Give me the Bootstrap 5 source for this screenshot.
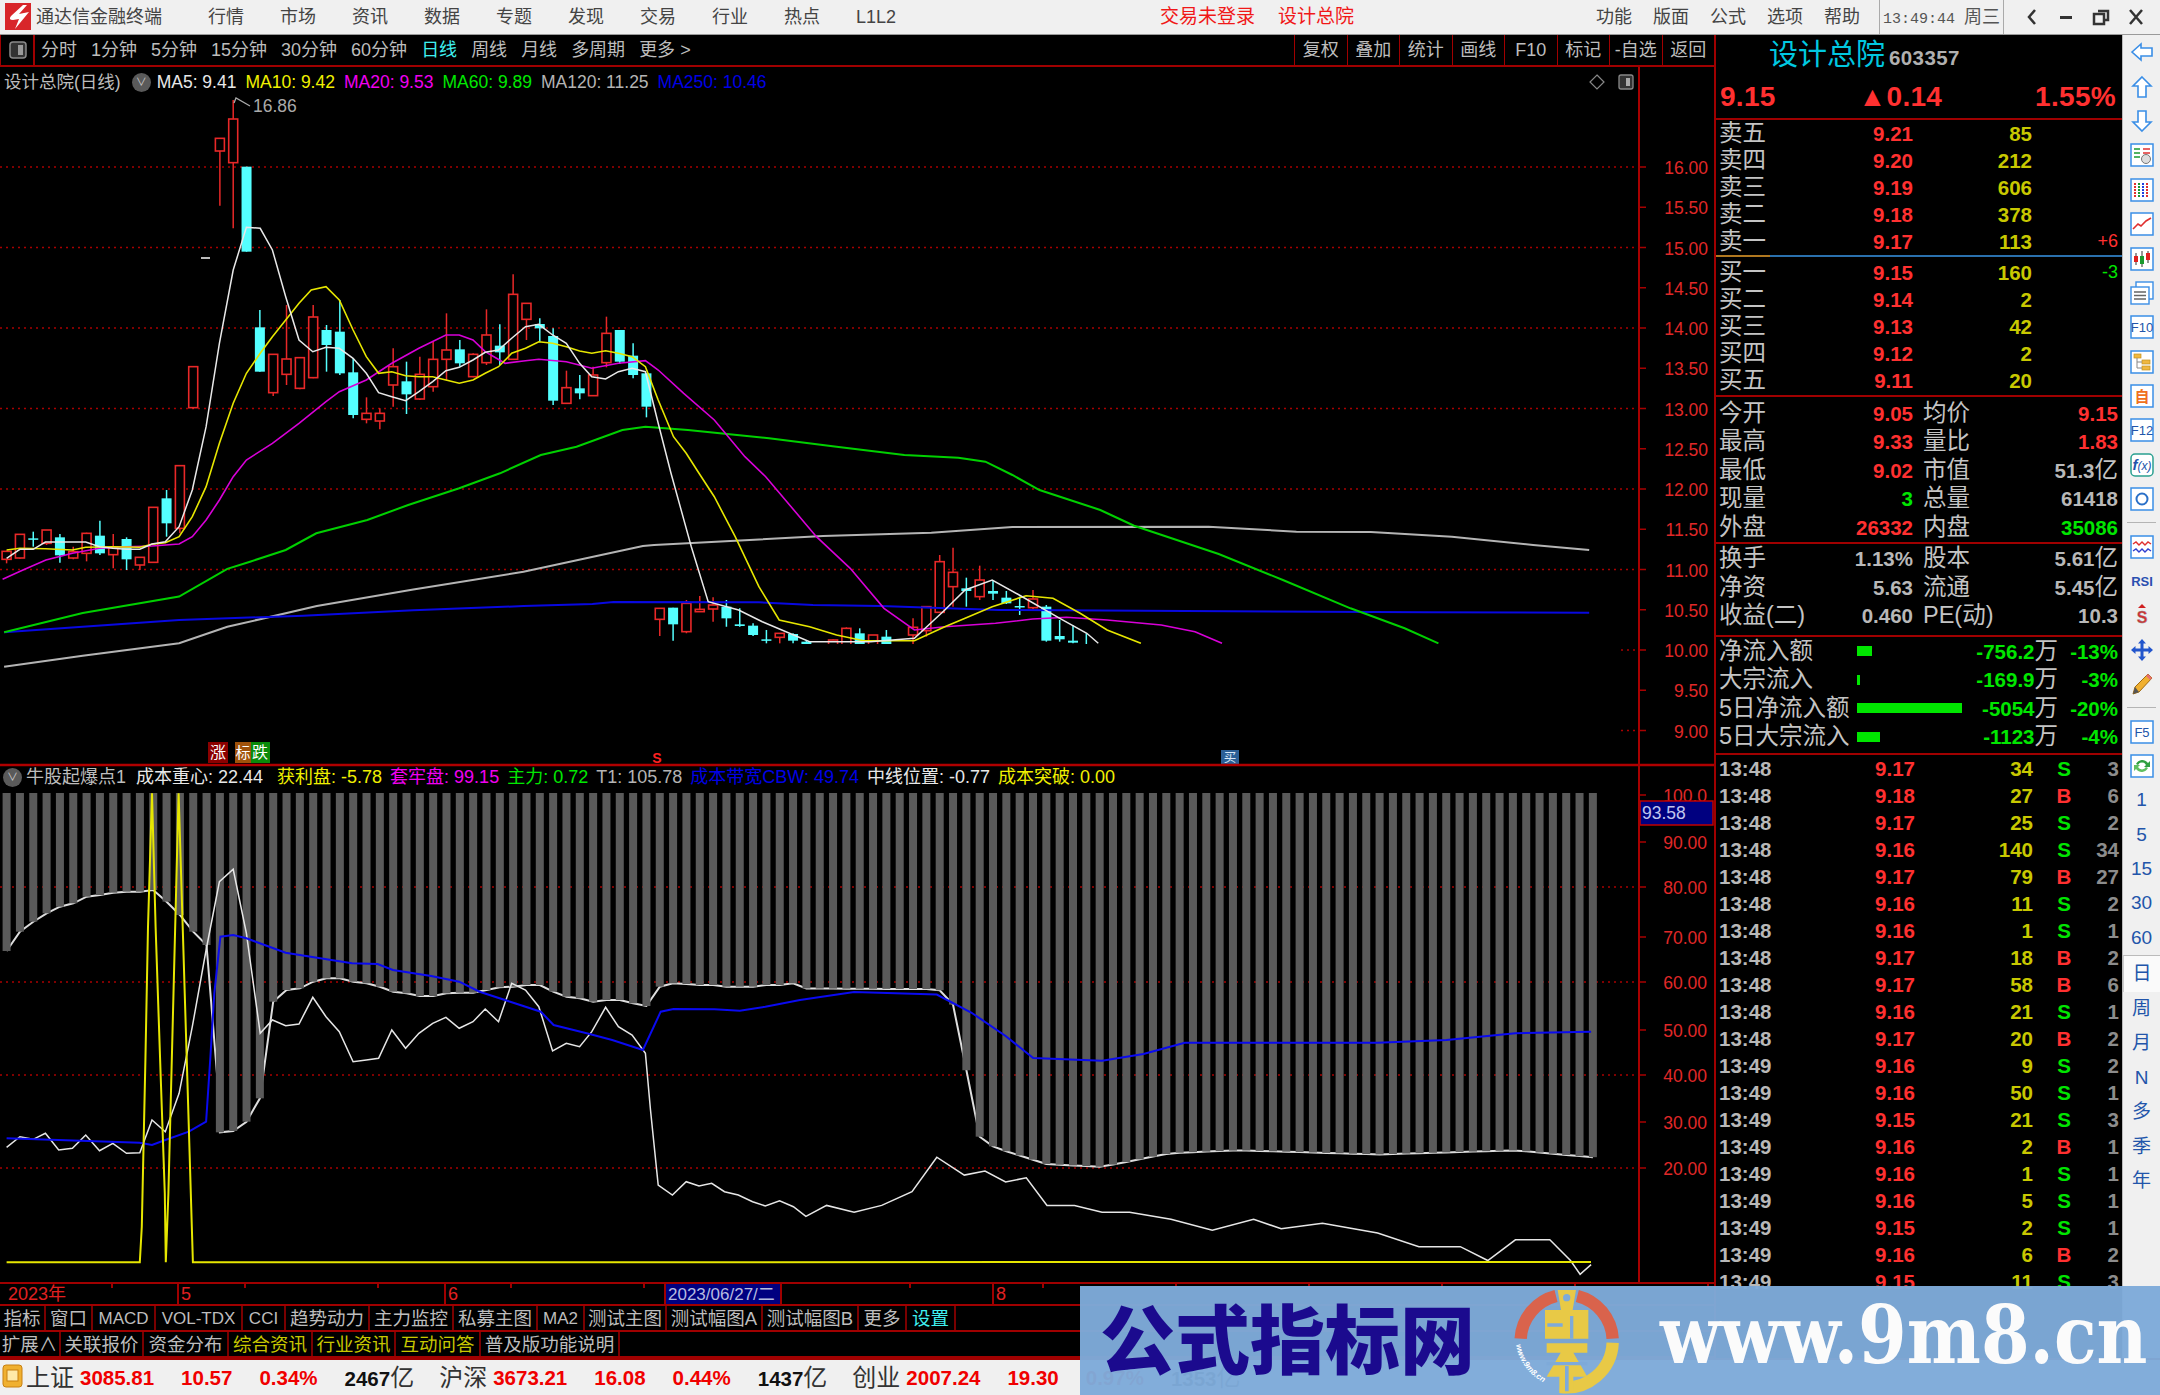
<!DOCTYPE html>
<html lang="zh-CN">
<head>
    <meta charset="UTF-8">
    <title>通达信金融终端</title>
    <link href="https://cdn.jsdelivr.net/npm/bootstrap@5.3.0/dist/css/bootstrap.min.css" rel="stylesheet">
    <style>
        html, body { margin: 0; background: #000; }
        body { font-family: "Liberation Sans", "Noto Sans CJK SC", sans-serif; }
        #app { width: 2160px; height: 1395px; overflow: hidden; }

        /* title bar */
        .title-bar { height: 35px; background: #f0f0f0; border-bottom: 1px solid #9a9a9a; color: #444; font-size: 18px; line-height: 34px; white-space: nowrap; }
        .brand-logo { margin: 3px 5px 0 5px; }
        .menu-left { margin-left: 46px; gap: 36px; }
        .menu-mid { margin-left: 264px; gap: 23px; color: #f01818; font-size: 19px; }
        .menu-right { margin-left: auto; gap: 21px; }
        .clock { margin-left: 19px; padding-left: 3px; border-left: 1px solid #aaa; color: #555; font-size: 15px; height: 34px; }
        .clock b { font-weight: 400; font-family: "Liberation Mono", monospace; margin-right: 9px; }
        .clock i { font-style: normal; font-size: 18px; margin-right: 3px; }
        .win-btns { border-left: 1px solid #aaa; height: 34px; width: 157px; padding: 8px 0 0 20px; gap: 17px; }

        /* period toolbar */
        .tool-bar { height: 32px; border-bottom: 2px solid #a00000; color: #bdbdbd; font-size: 18px; line-height: 31px; white-space: nowrap; }
        .toggle-box { width: 35px; border-right: 2px solid #a00000; border-left: 1px solid #a00000; margin-right: 6px; padding: 6px 0 0 8px; }
        .toggle-box svg { display: block; }
        .period-list { gap: 14px; }
        .period-on { color: #3ff0f0; }
        .tool-cell { width: 52.5px; text-align: center; border-left: 1px solid #a00000; }

        /* chart */
        .chart-box { width: 1714px; height: 1215px; }
        .chart-box svg { display: block; }
        .chart-box text { font-family: "Liberation Sans", "Noto Sans CJK SC", sans-serif; }
        .legend-row { position: absolute; left: 0; display: flex; font-size: 17.5px; line-height: 24px; color: #bdbdbd; white-space: nowrap; }
        .legend-main { top: 3px; padding-left: 4px; }
        .legend-sub { top: 698px; padding-left: 3px; font-size: 18px; }
        .lg-gap { margin-left: 9px; }
        .legend-sub .lg-gap { margin-left: 8px; }
        .legend-sub .lg-wide { margin-left: 10px; margin-right: 6px; }
        .tip-ball { width: 19px; height: 19px; border-radius: 50%; background: #5a5a5a; margin-top: 3px; color: #ccc; font-size: 11px; line-height: 19px; text-align: center; }
        .c-white { color: #e8e8e8; }
        .c-yellow { color: #f0f000; }
        .c-pink { color: #f000f0; }
        .c-green { color: #00e800; }
        .c-gray { color: #b4b4b4; }
        .c-blue { color: #0000e6; }

        /* bottom of the left column */
        .time-axis { height: 24px; border-top: 2px solid #a00000; border-bottom: 2px solid #a00000; color: #e02020; font-size: 18px; line-height: 21px;
            background: repeating-linear-gradient(90deg, transparent 0 111px, #a00000 111px 113px, transparent 113px 133px) top left / 100% 4px no-repeat; }
        .axis-cell { border-right: 2px solid #a00000; padding-left: 2px; }
        .axis-now { background: #000080; color: #b6bce0; padding: 0 2px; width: 116px; border-right: 2px solid #a00000; font-size: 17px; white-space: nowrap; }
        .tab-row { height: 26px; border-bottom: 2px solid #a00000; color: #bdbdbd; font-size: 18.5px; line-height: 25px; white-space: nowrap; }
        .tab-cell { text-align: center; border-right: 2px solid #7a0000; }
        .tab-cell.sm { font-size: 17px; }
        .tab-yellow { color: #c8c800; }
        .tab-cyan { color: #3ff0f0; }

        /* quote panel */
        .left-col { width: 1716px; border-right: 2px solid #a00000; }
        .main-row { height: 1323px; }
        .quote-panel { width: 406px; color: #c0c0c0; font-size: 20.5px; line-height: 27px; white-space: nowrap; overflow: hidden; }
        .q-name { height: 42px; padding-left: 53px; line-height: 40px; }
        .q-name b { font-weight: 400; color: #00c8e0; font-size: 29px; }
        .q-name span { font-weight: 700; font-size: 20.5px; margin-left: 4px; color: #b0b0b0; letter-spacing: .4px; }
        .q-price { height: 43px; padding: 0 6px 0 4px; border-bottom: 2px solid #a00000; color: #ff3030; font-size: 28px; font-weight: 700; line-height: 40px; letter-spacing: .3px; }
        .q-sect { padding: 0 2px 0 3px; flex: none; }
        .q-sect.line-b { border-bottom: 2px solid #a00000; }
        .q-label { font-size: 23.5px; color: #c4c4c4; font-weight: 400; }
        .depth-row, .stat-row, .flow-row, .deal-row { display: grid; align-items: center; font-weight: 700; }
        .depth-row { height: 27px; grid-template-columns: 60px 134px 119px 86px; }
        .stat-row { height: 28.5px; grid-template-columns: 60px 134px 10px 60px 1fr; padding-right: 2px; }
        .flow-row { height: 28.5px; grid-template-columns: 138px 110px 91px 60px; }
        .deal-row { height: 27px; grid-template-columns: 196px 118px 62px 24px; }
        .depth-split { height: 2px; flex: none; margin: 0 0 2px 0; background: linear-gradient(90deg, #b07820 54px, #2a70ad 54px); }
        .flow-bar { display: block; height: 10px; background: #00e600; }
        .v-red { color: #ff3030; }
        .v-yel { color: #c8c800; }
        .v-grn { color: #00e600; }
        .v-gry { color: #b8b8b8; }
        .v-dim { color: #8c8c8c; }
        .v-small { font-weight: 400; font-size: 18px; }

        /* side strip */
        .side-strip { width: 38px; background: #f0f0f0; border-left: 1px solid #bbb; color: #2255aa; font-size: 19px; }
        .side-ic { height: 34.4px; flex: none; }
        .side-ic svg text { font-family: "Liberation Sans", "Noto Sans CJK SC", sans-serif; }
        .side-sep { height: 13px; flex: none; }
        .side-sep i { display: block; margin: 6px 4px 0; height: 1px; background: #b4b4b4; }
        .side-now { height: 37px; flex: none; background: #fafafa; border-top: 1px solid #bbb; border-left: 1px solid #ccc; }

        /* status bar */
        .status-bar { height: 37px; background: #f0f0f0; border-top: 2px solid #a00000; line-height: 35px; font-size: 20.5px; font-weight: 700; color: #f00000; white-space: nowrap; padding-left: 2px; }
        .st-name { color: #333; font-size: 24px; font-weight: 400; margin-left: 25px; margin-right: 6px; }
        .st-name.first { margin-left: 3px; }
        .st-val { margin-left: 27px; }
        .st-val.first { margin-left: 0; }
        .st-amt { color: #111; }
        .st-amt em { font-style: normal; font-weight: 400; font-size: 24px; color: #333; }

        /* watermark strip */
        .stamp { position: absolute; left: 1080px; top: 1286px; width: 1080px; height: 109px; background: rgba(126, 170, 217, .97); }
        .stamp-cn { margin-left: 20px; width: 394px; font-family: "Noto Sans CJK SC", sans-serif; font-weight: 900; font-size: 75px; line-height: 100px; color: #1b0a8e; white-space: nowrap; }
        .stamp-logo { margin-left: -4px; width: 160px; }
        .stamp-url { margin-left: 10px; font-family: "DejaVu Serif", serif; font-weight: 700; font-size: 70px; line-height: 100px; color: #fbfbfb; transform: scaleY(1.15); white-space: nowrap; }
    </style>
</head>
<body>
<div id="app" class="position-relative">
    <!-- title bar -->
    <div class="title-bar d-flex">
        <svg class="brand-logo" width="26" height="27" viewBox="0 0 26 27"><rect width="26" height="27" fill="#d8262a"/><path d="M18 2 L6 13 Q3 17 8 17 L14 16 L10 26 L24 9 L14 11 L22 2Z" fill="#fff"/></svg>
        <span>通达信金融终端</span>
        <div class="d-flex menu-left"><span>行情</span><span>市场</span><span>资讯</span><span>数据</span><span>专题</span><span>发现</span><span>交易</span><span>行业</span><span>热点</span><span>L1L2</span></div>
        <div class="d-flex menu-mid"><span>交易未登录</span><span>设计总院</span></div>
        <div class="d-flex menu-right"><span>功能</span><span>版面</span><span>公式</span><span>选项</span><span>帮助</span></div>
        <div class="clock"><b>13:49:44</b><i>周三</i></div>
        <div class="win-btns d-flex">
            <svg width="16" height="18" viewBox="0 0 16 18"><path d="M11 2 L5 9 L11 16" fill="none" stroke="#333" stroke-width="2.5"/></svg>
            <svg width="18" height="18" viewBox="0 0 18 18"><rect x="3" y="8" width="12" height="3" fill="#333"/></svg>
            <svg width="18" height="18" viewBox="0 0 18 18"><path d="M6 3H16V12H13M2 6H12V16H2Z" fill="none" stroke="#333" stroke-width="2.5"/></svg>
            <svg width="18" height="18" viewBox="0 0 18 18"><path d="M3 2 L15 16 M15 2 L3 16" stroke="#333" stroke-width="2.5"/></svg>
        </div>
    </div>

    <div class="d-flex main-row">
        <div class="left-col d-flex flex-column">
            <!-- period toolbar -->
            <div class="tool-bar d-flex">
                <div class="toggle-box"><svg width="18" height="18" viewBox="0 0 18 18"><rect x="1" y="1" width="16" height="16" rx="3" fill="#333" stroke="#8a8a8a" stroke-width="1.5"/><rect x="9" y="4" width="5" height="10" fill="#9a9a9a"/></svg></div>
                <div class="d-flex period-list">
                    <span>分时</span><span>1分钟</span><span>5分钟</span><span>15分钟</span><span>30分钟</span><span>60分钟</span><span class="period-on">日线</span><span>周线</span><span>月线</span><span>多周期</span><span>更多 &gt;</span>
                </div>
                <div class="d-flex ms-auto">
                    <span class="tool-cell">复权</span><span class="tool-cell">叠加</span><span class="tool-cell">统计</span><span class="tool-cell">画线</span><span class="tool-cell">F10</span><span class="tool-cell">标记</span><span class="tool-cell">-自选</span><span class="tool-cell">返回</span>
                </div>
            </div>

            <!-- chart canvas, legends sit over it -->
            <div class="chart-box position-relative">
                <svg id="chart" width="1714" height="1215" viewBox="0 67 1714 1215"></svg>
                <div class="legend-row legend-main">
                    <span>设计总院(日线)</span>
                    <span class="tip-ball" style="margin-left:11px">&#8744;</span>
                    <span class="c-white" style="margin-left:6px">MA5: 9.41</span>
                    <span class="c-yellow lg-gap">MA10: 9.42</span>
                    <span class="c-pink lg-gap">MA20: 9.53</span>
                    <span class="c-green lg-gap">MA60: 9.89</span>
                    <span class="c-gray lg-gap">MA120: 11.25</span>
                    <span class="c-blue lg-gap">MA250: 10.46</span>
                </div>
                <div class="legend-row legend-sub">
                    <span class="tip-ball">&#8744;</span>
                    <span class="ms-1">牛股起爆点1</span>
                    <span class="c-white lg-wide">成本重心: 22.44</span>
                    <span class="c-yellow lg-gap">获利盘: -5.78</span>
                    <span class="c-pink lg-gap">套牢盘: 99.15</span>
                    <span class="c-green lg-gap">主力: 0.72</span>
                    <span class="c-gray lg-gap">T1: 105.78</span>
                    <span class="c-blue lg-gap">成本带宽CBW: 49.74</span>
                    <span class="c-white lg-gap">中线位置: -0.77</span>
                    <span class="c-yellow lg-gap">成本突破: 0.00</span>
                </div>
            </div>

            <div class="time-axis d-flex">
                <span class="axis-cell ps-2" style="width:179px">2023年</span>
                <span class="axis-cell" style="width:267px">5</span>
                <span class="axis-cell" style="width:220px">6</span>
                <span class="axis-now">2023/06/27/二</span>
                <span class="axis-cell" style="width:212px"></span>
                <span class="axis-cell border-0">8</span>
            </div>
            <div class="tab-row d-flex">
                <span class="tab-cell" style="width:46px">指标</span><span class="tab-cell" style="width:47px">窗口</span><span class="tab-cell sm" style="width:63px">MACD</span><span class="tab-cell sm" style="width:87px">VOL-TDX</span><span class="tab-cell sm" style="width:43px">CCI</span><span class="tab-cell" style="width:84px">趋势动力</span><span class="tab-cell" style="width:84px">主力监控</span><span class="tab-cell" style="width:84px">私募主图</span><span class="tab-cell sm" style="width:47px">MA2</span><span class="tab-cell" style="width:82px">测试主图</span><span class="tab-cell" style="width:96px">测试幅图A</span><span class="tab-cell" style="width:96px">测试幅图B</span><span class="tab-cell" style="width:48px">更多</span><span class="tab-cell tab-cyan" style="width:49px">设置</span>
            </div>
            <div class="tab-row d-flex">
                <span class="tab-cell" style="width:61px">扩展∧</span><span class="tab-cell" style="width:83px">关联报价</span><span class="tab-cell" style="width:85px">资金分布</span><span class="tab-cell tab-yellow" style="width:84px">综合资讯</span><span class="tab-cell tab-yellow" style="width:83px">行业资讯</span><span class="tab-cell tab-yellow" style="width:85px">互动问答</span><span class="tab-cell" style="width:139px">普及版功能说明</span>
            </div>
        </div>

        <!-- quote panel -->
        <div class="quote-panel d-flex flex-column">
            <div class="q-name"><b>设计总院</b><span>603357</span></div>
            <div class="q-price d-flex justify-content-between"><span>9.15</span><span style="margin-right:10px">▲0.14</span><span>1.55%</span></div>
            <div class="q-sect" id="depthAsk"></div>
            <div class="depth-split"></div>
            <div class="q-sect line-b" id="depthBid" style="padding-bottom:1px"></div>
            <div class="q-sect line-b" id="statA" style="padding-top:2px"></div>
            <div class="q-sect line-b" id="statB" style="padding-top:1px;padding-bottom:5px"></div>
            <div class="q-sect line-b" id="flows" style="padding-bottom:2px"></div>
            <div class="q-sect" id="deals"></div>
        </div>

        <!-- side strip -->
        <div class="side-strip d-flex flex-column" id="side"></div>
    </div>

    <!-- index status bar -->
    <div class="status-bar d-flex">
        <svg class="mt-1" width="21" height="24" viewBox="0 0 21 24"><rect x="1" y="1" width="19" height="22" rx="3" fill="#f0b030" stroke="#c88010"/><rect x="5" y="6" width="11" height="11" fill="#ffe9a8" stroke="#c88010"/></svg>
        <span class="st-name first">上证</span><span class="st-val first">3085.81</span><span class="st-val">10.57</span><span class="st-val">0.34%</span><span class="st-val st-amt">2467<em>亿</em></span>
        <span class="st-name">沪深</span><span class="st-val first">3673.21</span><span class="st-val">16.08</span><span class="st-val">0.44%</span><span class="st-val st-amt">1437<em>亿</em></span>
        <span class="st-name">创业</span><span class="st-val first">2007.24</span><span class="st-val">19.30</span><span class="st-val">0.97%</span><span class="st-val st-amt">1353<em>亿</em></span>
    </div>

    <!-- watermark strip over the bottom right -->
    <div class="stamp d-flex">
        <div class="stamp-cn">公式指标网</div>
        <svg class="stamp-logo" width="160" height="109" viewBox="0 0 480 327">
            <g fill="none" stroke-width="37">
                <path d="M92 158 A140 140 0 0 1 198 30" stroke="#d9634c"/>
                <path d="M262 30 A140 140 0 0 1 368 158" stroke="#d9634c"/>
                <path d="M368 170 A140 140 0 0 1 210 303" stroke="#e8c946"/>
            </g>
            <path d="M203 12H258L248 72H295V158H165V72H213Z" fill="#e8c946"/>
            <circle cx="230" cy="35" r="11" fill="#7eaad9"/>
            <path d="M172 112H218V122H172ZM240 90H250V158H240Z" fill="#7eaad9"/>
            <path d="M170 172H292V200H250L292 272H250V316H208V272H170L212 200H170Z" fill="#e8c946"/>
            <path d="M170 228H292V238H170ZM225 240H236V316H225Z" fill="#7eaad9"/>
            <path id="logoArc" d="M78 176 A156 156 0 0 0 196 302" fill="none"/>
            <text font-family="Liberation Sans" font-style="italic" font-weight="700" font-size="24" fill="#fff"><textPath href="#logoArc">www.9m8.cn</textPath></text>
        </svg>
        <div class="stamp-url">www.9m8.cn</div>
    </div>
</div>

<script src="https://cdn.jsdelivr.net/npm/bootstrap@5.3.0/dist/js/bootstrap.bundle.min.js"></script>
<script>
document.addEventListener('DOMContentLoaded', function() {
    // points read off the reference at different crop scales
    const z7 = pts => pts.map(([x, y]) => [x / 1.96, 90 + y / 3]);
    const z8 = pts => pts.map(([x, y]) => [600 + x / 1.479, 380 + y / 3]);
    const z9 = pts => pts.map(([x, y]) => [x / 1.96, 760 + y / 3]);
    const sh = pts => pts.map(([x, y]) => [x * 1.3776, y * 1.3776]);
    const barX = i => 6.6 + 13.33 * i;

    function line(pts, color, w, clip) {
        const d = pts.map(p => p[0].toFixed(1) + ',' + p[1].toFixed(1)).join(' ');
        return `<polyline points="${d}" fill="none" stroke="${color}" stroke-width="${w}"${clip ? ' clip-path="url(#topClip)"' : ''}/>`;
    }
    function dots(y, x1, x2) {
        return `<line x1="${x1}" y1="${y}" x2="${x2}" y2="${y}" stroke="#a80000" stroke-width="1.5" stroke-dasharray="2 4"/>`;
    }
    function label(x, y, txt, color, size, anchor) {
        return `<text x="${x}" y="${y}" fill="${color}" font-size="${size}" text-anchor="${anchor || 'start'}">${txt}</text>`;
    }

    // everything right of the flat stretch is blanked below y=644 in the reference
    let s = '<defs><clipPath id="topClip"><rect x="0" y="67" width="1640" height="577"/><rect x="0" y="644" width="640" height="116"/></clipPath></defs>';

    // main chart grid and price axis
    const priceY = p => 167 + (16 - p) * 80.5;
    [16, 15, 14, 13, 12, 11].forEach(p => { s += dots(priceY(p), 0, 1639); });
    [10, 9].forEach(p => { s += dots(priceY(p), 1621, 1639); });
    for (let p = 16; p >= 9; p -= 0.5) {
        s += `<line x1="1639" y1="${priceY(p)}" x2="1646" y2="${priceY(p)}" stroke="#a80000" stroke-width="1.5"/>`;
        s += label(1708, priceY(p) + 7, p.toFixed(2), '#e02828', 17.5, 'end');
    }

    // candles: [wick top, body top, body bottom, wick bottom]
    const early = ['r,1382,1384,1408,1420','r,1333,1333,1404,1406','c,1325,1345,1347,1370','r,1320,1320,1360,1365','c,1332,1342,1396,1418','r,1370,1385,1404,1408','r,1328,1330,1390,1414','c,1292,1337,1390,1395','r,1332,1372,1394,1435','c,1342,1347,1408,1440','r,1402,1402,1425,1440','r,1252,1252,1417,1417','c,1200,1225,1300,1340','r,1127,1127,1315,1330','r,830,830,953,956','','r,145,145,183,347','r,30,87,218,415','c,230,230,485,485','c,660,712,845,845','r,793,793,908,918','r,645,807,853,885','r,803,803,895,898','r,645,681,863,865','c,705,720,765,845','c,630,725,850,855','c,805,847,975,985','r,922,970,988,1000','r,955,970,993,1018','r,775,830,885,950','c,815,874,913,972','r,800,853,927,930','r,755,808,890,905','r,670,780,808,870','c,750,778,820,830','r,790,793,860,862','r,658,735,818,825','c,703,767,787,825','r,553,613,808,810','r,640,640,688,750','c,685,702,715,755','c,715,738,932,945','r,842,893,940,940','c,855,895,910,928','r,830,855,917,917','r,680,730,818,832','c,720,720,815,822','c,760,797,855,865','c,850,850,950,982'];
    const late = ['r,685,685,718,768','c,683,683,733,782','r,660,670,755,760','r,648,688,695,695','r,652,675,687,725','c,660,680,715,740','c,685,733,738,740','c,730,737,765,768','c,750,778,782,790','r,760,760,772,790','c,760,762,782,790','c,780,785,830,830','','r,778,780,800,800','r,742,745,800,800','c,745,760,800,800','r,765,765,800,800','c,750,770,800,800','','r,715,742,765,800','r,678,680,752,770','r,525,545,697,697','r,503,577,620,680','c,593,625,633,680','r,557,600,650,660','c,600,633,641,660','c,633,653,670,672','c,650,678,682,705','r,630,657,683,688','c,675,680,782,785','c,720,768,778,785','c,735,782,788,790','c,760,800,830,830'];
    function candle(i, row, toY) {
        if (!row) return '';
        const p = row.split(',');
        const col = p[0] === 'r' ? '#e82828' : '#54ffff';
        const [a, b, c, d] = p.slice(1).map(v => toY(+v));
        const x = barX(i);
        const h = Math.max(c - b, 1.5);
        let o = `<line x1="${x}" y1="${a}" x2="${x}" y2="${d}" stroke="${col}" stroke-width="1.5"/>`;
        if (p[0] === 'r') o += `<rect x="${x - 4.5}" y="${b}" width="9" height="${h}" fill="#000" stroke="${col}" stroke-width="1.6"/>`;
        else o += `<rect x="${x - 5}" y="${b}" width="10" height="${h}" fill="${col}"/>`;
        return o;
    }
    let cs = '';
    early.forEach((row, i) => { cs += candle(i, row, v => 90 + v / 3); });
    late.forEach((row, i) => { cs += candle(49 + i, row, v => 380 + v / 3); });
    s += `<g clip-path="url(#topClip)">${cs}</g>`;
    s += '<rect x="201" y="257" width="9" height="2" fill="#bbb"/>';

    // moving averages
    const ma120 = sh([[3,484],[60,476],[130,467],[165,455],[230,440],[300,428],[380,415]]).concat(z7([[1260,1368]]), z8([[80,495],[200,482],[330,468],[490,458],[610,441],[900,440],[1030,455],[1140,456],[1260,470],[1380,495],[1463,510]]));
    const ma250 = sh([[3,459],[130,450],[220,447],[300,443],[380,440],[430,438.5]]).concat(z8([[20,666],[235,667],[315,675],[415,678],[590,690],[865,693],[1220,697],[1463,698]]));
    const ma60 = sh([[3,459],[60,445],[130,433],[165,413]]).concat(z7([[490,1415],[560,1380],[620,1330],[720,1290],[800,1245],[900,1195],[980,1150],[1060,1095],[1130,1070],[1220,1020],[1265,1010]]), z8([[130,150],[250,175],[350,200],[450,225],[530,233],[570,245],[610,285],[650,330],[740,390],[790,437],[915,522],[1010,600],[1110,685],[1190,745],[1240,790]]));
    const ma20 = z7([[5,1468],[45,1440],[90,1410],[142,1390],[195,1375],[248,1370],[298,1368],[351,1362],[377,1340],[404,1290],[430,1230],[457,1160],[483,1110],[534,1060],[586,1000],[639,935],[665,905],[718,870],[768,820],[821,775],[874,735],[900,735],[927,750],[951,785],[990,820],[1030,812],[1056,808],[1110,815],[1160,835],[1212,820],[1265,812],[1290,840],[1340,910],[1400,990],[1460,1100]]).concat(z8([[245,290],[320,470],[370,565],[420,685],[465,750],[510,740],[585,730],[640,717],[690,712],[750,720],[830,735],[880,755],[920,790]]));
    const ma10 = z7([[13,1380],[39,1375],[89,1376],[142,1380],[168,1372],[221,1370],[274,1372],[298,1363],[324,1358],[351,1340],[377,1280],[404,1190],[430,1060],[457,940],[483,850],[510,790],[534,740],[560,690],[586,640],[610,600],[639,590],[665,630],[692,720],[718,800],[742,850],[768,845],[795,857],[821,860],[848,860],[874,870],[900,880],[927,870],[951,850],[977,830],[1003,790],[1030,775],[1056,755],[1083,760],[1110,770],[1136,783],[1160,790],[1187,782],[1212,790],[1239,800],[1265,830],[1290,930],[1320,1040],[1345,1090],[1370,1150],[1400,1220]]).concat(z8([[200,470],[235,620],[265,720],[310,740],[350,765],[390,782],[465,782],[510,740],[540,715],[580,680],[630,647],[670,655],[710,700],[750,750],[800,790]]));
    const ma5 = z7([[13,1405],[39,1378],[65,1378],[89,1356],[115,1356],[168,1356],[195,1370],[221,1375],[248,1378],[274,1378],[298,1362],[324,1355],[351,1310],[377,1200],[404,1010],[430,760],[457,540],[483,412],[510,415],[534,480],[560,620],[586,750],[613,785],[639,772],[665,775],[692,805],[718,850],[742,908],[768,920],[795,932],[821,905],[848,875],[874,842],[900,832],[927,810],[951,787],[977,780],[1003,745],[1030,710],[1056,703],[1083,735],[1110,760],[1136,820],[1160,860],[1187,867],[1212,845],[1239,835],[1265,845],[1290,1000]]).concat(z8([[105,280],[135,500],[160,665],[205,690],[240,725],[310,785],[400,785],[465,775],[510,690],[540,630],[580,600],[620,645],[680,715],[720,760],[737,790]]));
    s += line(ma120, '#b4b4b4', 2, true) + line(ma250, '#0808e0', 2, true) + line(ma60, '#00d000', 2, true);
    s += line(ma20, '#d800d8', 1.6, true) + line(ma10, '#e6e600', 1.6, true) + line(ma5, '#e8e8e8', 1.5, true);

    // top price note and the marks along the pane bottom
    s += '<path d="M234 103 L236 98 L250 106" fill="none" stroke="#aaa" stroke-width="1.3"/>';
    s += label(253, 112, '16.86', '#aaa', 17.5);
    s += '<rect x="208" y="742" width="20" height="21" fill="#8b0000"/>' + label(218, 758, '涨', '#fff', 16, 'middle');
    s += '<rect x="235" y="742" width="16" height="21" fill="#a0520a"/>' + label(243, 758, '标', '#fff', 15, 'middle');
    s += '<rect x="251" y="742" width="19" height="21" fill="#0a8a0a"/>' + label(260, 758, '跌', '#fff', 16, 'middle');
    s += `<text x="657" y="763" fill="#ff2020" font-size="14" font-weight="700" text-anchor="middle">S</text>`;
    s += '<rect x="1221" y="750" width="18" height="15" fill="#2b5f96"/>' + label(1230, 762, '买', '#d8e8f8', 12.5, 'middle');
    s += '<path d="M1597 75 L1604 82 L1597 89 L1590 82Z" fill="none" stroke="#888" stroke-width="1.2"/>';
    s += '<rect x="1619" y="75" width="14" height="14" rx="2" fill="#333" stroke="#888" stroke-width="1.3"/><rect x="1626" y="78" width="4" height="8" fill="#aaa"/>';

    // sub chart grid and axis
    [887, 982, 1075, 1168].forEach(y => { s += dots(y, 0, 1639); });
    [[100, 795], [90, 842], [80, 887], [70, 937], [60, 982], [50, 1030], [40, 1075], [30, 1122], [20, 1168]].forEach(([v, y]) => {
        s += `<line x1="1639" y1="${y}" x2="1646" y2="${y}" stroke="#a80000" stroke-width="1.5"/>`;
        s += label(1707, y + 7, v === 100 ? '100.0' : v.toFixed(2), '#e02828', 17.5, 'end');
    });

    // grey cost bars hang from the top; their ends follow this curve
    const barEnds = [573,515,485,460,440,430,410,405,398,395,395,390,425,465,515,555,1117,1113,1085,1015,725,690,685,665,655,655,665,670,680,695,700,708,708,700,698,698,690,682,680,675,675,695,710,715,725,720,720,730,738,680,670,672,675,675,680,680,680,675,675,670].map(v => 760 + v / 3);
    const tailCurve = sh([[431,987],[480,717],[680,718],[690,722],[697,750],[707,810],[711,825],[722,833],[760,845],[800,847],[850,837],[900,835],[1000,838],[1100,835],[1155,840]]);
    function tailAt(x) {
        for (let k = 1; k < tailCurve.length; k++) {
            if (x <= tailCurve[k][0]) {
                const [x0, y0] = tailCurve[k - 1], [x1, y1] = tailCurve[k];
                return y0 + (y1 - y0) * (x - x0) / (x1 - x0);
            }
        }
        return tailCurve[tailCurve.length - 1][1];
    }
    const ends = [];
    for (let i = 0; i <= 119; i++) ends.push(i < barEnds.length ? barEnds[i] : tailAt(barX(i)));
    const endPts = ends.map((y, i) => [barX(i), y]);
    endPts.splice(16, 0, [barX(15) + 11, 1080]);
    s += line(endPts, '#dddddd', 2);
    ends.forEach((y, i) => { s += `<rect x="${barX(i) - 4}" y="793" width="8" height="${y - 793}" fill="#5a5a5a"/>`; });

    // sub chart lines
    const subWhite = z9([[13,1162],[39,1130],[65,1138],[89,1120],[115,1170],[142,1165],[168,1125],[195,1172],[221,1150],[248,1180],[274,1178],[298,1080],[324,1115],[351,1000],[377,800],[404,570],[430,365],[457,328],[483,520],[510,820],[534,780],[560,797],[586,792],[613,712],[639,770],[665,815],[692,905],[718,900],[742,895],[768,810],[795,865],[821,820],[848,790],[874,772],[900,805],[927,785],[951,747],[977,785],[1003,670],[1030,690],[1056,740],[1083,873],[1110,850],[1136,860],[1160,815],[1187,742],[1212,800],[1239,825],[1265,880],[1275,1050],[1290,1275],[1318,1305],[1345,1265],[1370,1278],[1395,1270],[1420,1295],[1447,1305],[1475,1325],[1500,1338],[1528,1322],[1555,1340]]).concat(sh([[585,883],[600,875],[620,880],[640,875],[662,865],[680,840],[700,853],[715,850],[730,858],[745,855],[760,875],[780,875],[800,880],[820,880],[850,885],[880,893],[910,885],[930,892],[960,888],[1000,895],[1030,905],[1060,905],[1080,915],[1100,900],[1125,900],[1140,915],[1147,925],[1155,918]]));
    const subBlue = z9([[13,1135],[274,1148],[298,1155],[324,1140],[370,1115],[404,1085],[412,900],[420,700],[432,530],[457,525],[483,535],[560,578],[640,598],[690,610],[740,612],[770,630],[845,648],[900,665],[940,695],[1000,725],[1060,755],[1085,795],[1150,820],[1200,840],[1260,870],[1295,755],[1320,747],[1400,748],[1450,752],[1500,740],[1568,720]]).concat(sh([[620,720],[680,722],[705,735],[730,752],[750,768],[800,770],[830,765],[860,757],[900,757],[1000,757],[1050,755],[1100,750],[1155,749]]));
    const subYellow = z9([[13,1507],[274,1507],[278,1400],[285,900],[290,500],[298,100],[305,500],[315,950],[323,1300],[325,1507],[330,1300],[340,700],[350,100],[358,500],[370,1100],[378,1507]]).concat([[1591, 1262]]);
    s += line(subWhite, '#e6e6e6', 1.5) + line(subBlue, '#0a0af0', 2) + line(subYellow, '#e6e600', 2);

    // frame lines
    s += '<rect x="1640" y="801" width="73" height="24" fill="#000080" stroke="#c00000" stroke-width="1.5"/>' + label(1642, 819, '93.58', '#c0c6ee', 17.5);
    s += '<line x1="0" y1="765" x2="1714" y2="765" stroke="#b00000" stroke-width="2.5"/>';
    s += '<line x1="1639" y1="67" x2="1639" y2="1282" stroke="#a80000" stroke-width="2"/>';
    document.getElementById('chart').innerHTML = s;

    // quote panel rows
    const depth = (name, price, vol, diff, cls) => `<div class="depth-row"><span class="q-label">${name}</span><span class="text-end v-red">${price}</span><span class="text-end v-yel">${vol}</span><span class="text-end v-small ${cls || ''}">${diff || ''}</span></div>`;
    document.getElementById('depthAsk').innerHTML = [['卖五','9.21','85'],['卖四','9.20','212'],['卖三','9.19','606'],['卖二','9.18','378'],['卖一','9.17','113','+6','v-red']].map(r => depth(...r)).join('');
    document.getElementById('depthBid').innerHTML = [['买一','9.15','160','-3','v-grn'],['买二','9.14','2'],['买三','9.13','42'],['买四','9.12','2'],['买五','9.11','20']].map(r => depth(...r)).join('');

    const stat = (a, av, ac, b, bv, bc) => `<div class="stat-row"><span class="q-label">${a}</span><span class="text-end ${ac}">${av}</span><span></span><span class="q-label">${b}</span><span class="text-end ${bc}">${bv}</span></div>`;
    const yi = '<span class="q-label">亿</span>';
    document.getElementById('statA').innerHTML = [
        ['今开','9.05','v-red','均价','9.15','v-red'],
        ['最高','9.33','v-red','量比','1.83','v-red'],
        ['最低','9.02','v-red','市值','51.3' + yi,'v-gry'],
        ['现量','3','v-grn','总量','61418','v-gry'],
        ['外盘','26332','v-red','内盘','35086','v-grn']
    ].map(r => stat(...r)).join('');
    document.getElementById('statB').innerHTML = [
        ['换手','1.13%','v-gry','股本','5.61' + yi,'v-gry'],
        ['净资','5.63','v-gry','流通','5.45' + yi,'v-gry'],
        ['收益(二)','0.460','v-gry','PE(动)','10.3','v-gry']
    ].map(r => stat(...r)).join('');

    const wan = '<span class="q-label">万</span>';
    document.getElementById('flows').innerHTML = [
        ['净流入额', 15, '-756.2', '-13%'],
        ['大宗流入', 3, '-169.9', '-3%'],
        ['5日净流入额', 105, '-5054', '-20%'],
        ['5日大宗流入', 23, '-1123', '-4%']
    ].map(r => `<div class="flow-row"><span class="q-label">${r[0]}</span><span><i class="flow-bar" style="width:${r[1]}px"></i></span><span class="text-end v-grn">${r[2]}${wan}</span><span class="text-end v-grn">${r[3]}</span></div>`).join('');

    const tradeRows = [
        '13:48 9.17 34 S 3','13:48 9.18 27 B 6','13:48 9.17 25 S 2','13:48 9.16 140 S 34','13:48 9.17 79 B 27','13:48 9.16 11 S 2','13:48 9.16 1 S 1','13:48 9.17 18 B 2','13:48 9.17 58 B 6','13:48 9.16 21 S 1','13:48 9.17 20 B 2',
        '13:49 9.16 9 S 2','13:49 9.16 50 S 1','13:49 9.15 21 S 3','13:49 9.16 2 B 1','13:49 9.16 1 S 1','13:49 9.16 5 S 1','13:49 9.15 2 S 1','13:49 9.16 6 B 2','13:49 9.15 11 S 3'
    ];
    document.getElementById('deals').innerHTML = tradeRows.map(r => {
        const [t, p, v, side, n] = r.split(' ');
        return `<div class="deal-row"><span class="d-flex justify-content-between"><span class="v-gry">${t}</span><span class="v-red">${p}</span></span><span class="text-end v-yel">${v}</span><span class="text-center ${side === 'B' ? 'v-red' : 'v-grn'}">${side}</span><span class="text-end v-dim">${n}</span></div>`;
    }).join('');

    // side strip icons
    const frame = inner => `<rect x="1" y="1" width="22" height="22" fill="#fff" stroke="#3a8ee6" stroke-width="1.5"/>${inner}`;
    const keyText = t => frame(`<text x="12" y="17" font-size="13" text-anchor="middle" fill="#2255aa">${t}</text>`);
    const arrow = d => `<path d="${d}" fill="#fff" stroke="#3a8ee6" stroke-width="1.6"/>`;
    const icons = [
        arrow('M2 12 L11 4 V8 H22 V16 H11 V20 Z'),
        arrow('M12 2 L21 11 H16 V22 H8 V11 H3 Z'),
        arrow('M12 22 L21 13 H16 V2 H8 V13 H3 Z'),
        frame('<path d="M4 6H10M4 10H10M4 14H10" stroke="#1a9a30" stroke-width="1.6"/><path d="M13 6H20M13 10H20" stroke="#e03030" stroke-width="1.6"/><circle cx="16" cy="16" r="4.5" fill="#ddd" stroke="#777"/>'),
        frame('<path d="M5 5V19" stroke="#e03030" stroke-width="2" stroke-dasharray="2 1"/><path d="M9 5V19" stroke="#1a9a30" stroke-width="2" stroke-dasharray="2 1"/><path d="M13 5V19" stroke="#2040e0" stroke-width="2" stroke-dasharray="2 1"/><path d="M17 5V19" stroke="#e03030" stroke-width="2" stroke-dasharray="2 1"/>'),
        frame('<path d="M3 17 L8 12 L11 14 L16 9 L21 6" fill="none" stroke="#e03030" stroke-width="1.6"/>'),
        frame('<path d="M6 6V18M12 4V20M18 4V16" stroke="#333"/><rect x="4" y="9" width="4" height="6" fill="#e02020"/><rect x="10" y="9" width="4" height="8" fill="#1a9a30"/><rect x="16" y="6" width="4" height="7" fill="#e02020"/>'),
        '<rect x="6" y="1" width="17" height="17" fill="#fff" stroke="#3a8ee6" stroke-width="1.4"/>' + '<rect x="1" y="6" width="18" height="17" fill="#fff" stroke="#3a8ee6" stroke-width="1.4"/><path d="M4 11H16M4 14.5H16M4 18H16" stroke="#666" stroke-width="1.6"/>',
        keyText('F10'),
        frame('<rect x="4" y="4" width="7" height="4" fill="#f0b840" stroke="#c09020" stroke-width=".7"/><rect x="12" y="10" width="8" height="4" fill="#f0b840" stroke="#c09020" stroke-width=".7"/><rect x="12" y="16" width="8" height="4" fill="#f0b840" stroke="#c09020" stroke-width=".7"/><path d="M7 8V18H12M7 12H12" fill="none" stroke="#888"/>'),
        frame('<text x="12" y="18" font-size="15" font-weight="700" text-anchor="middle" fill="#f07020">自</text>'),
        keyText('F12'),
        '<rect x="1" y="1" width="22" height="22" rx="4" fill="#fff" stroke="#2aa090" stroke-width="1.5"/><text x="12" y="17" font-size="12" font-style="italic" text-anchor="middle" fill="#2255aa"><tspan font-weight="700" font-size="15">f</tspan>(x)</text>',
        frame('<circle cx="12" cy="12" r="5.5" fill="none" stroke="#2a70c8" stroke-width="2"/>'),
        null,
        frame('<path d="M3 9 L6 7 L9 10 L12 7 L15 10 L18 7 L21 9" fill="none" stroke="#e03030" stroke-width="1.4"/><path d="M3 16 L6 14 L9 17 L12 14 L15 17 L18 14 L21 16" fill="none" stroke="#3040d0" stroke-width="1.4"/>'),
        '<text x="12" y="17" font-size="13" font-weight="700" text-anchor="middle" fill="#2a4fb0">RSI</text>',
        '<path d="M12 1 L16 5 H8Z" fill="#d02020"/><text x="12" y="20" font-size="16" font-weight="700" text-anchor="middle" fill="#d83030" stroke="#888" stroke-width=".4">S</text>',
        '<path d="M12 1 L16 5.5 H13.5 V10.5 H18.5 V8 L23 12 L18.5 16 V13.5 H13.5 V18.5 H16 L12 23 L8 18.5 H10.5 V13.5 H5.5 V16 L1 12 L5.5 8 V10.5 H10.5 V5.5 H8 Z" fill="#2255cc"/>',
        '<path d="M3 22 L5 15 L18 2 L22 6 L9 20 Z" fill="#f0b030" stroke="#a06a10"/><path d="M3 22 L5 15 L9 20Z" fill="#555"/><path d="M18 2 L22 6 L20 8 L16 4Z" fill="#e87070"/>',
        null,
        keyText('F5'),
        frame('<path d="M6 10 A7 7 0 0 1 18 9 L20 7 V13 H14 L16 11 A4.5 4.5 0 0 0 8 11Z" fill="#30a040"/><path d="M18 14 A7 7 0 0 1 6 15 L4 17 V11 H10 L8 13 A4.5 4.5 0 0 0 16 13Z" fill="#60c060"/>')
    ];
    let side = '';
    icons.forEach(ic => {
        if (ic === null) side += '<div class="side-sep"><i></i></div>';
        else side += `<div class="side-ic d-flex align-items-center justify-content-center"><svg width="24" height="24" viewBox="0 0 24 24">${ic}</svg></div>`;
    });
    ['1', '5', '15', '30', '60'].forEach(t => { side += `<div class="side-ic d-flex align-items-center justify-content-center">${t}</div>`; });
    side += '<div class="side-now d-flex align-items-center justify-content-center">日</div>';
    ['周', '月', 'N', '多', '季', '年'].forEach(t => { side += `<div class="side-ic d-flex align-items-center justify-content-center">${t}</div>`; });
    document.getElementById('side').innerHTML = side;
});
</script>
</body>
</html>
